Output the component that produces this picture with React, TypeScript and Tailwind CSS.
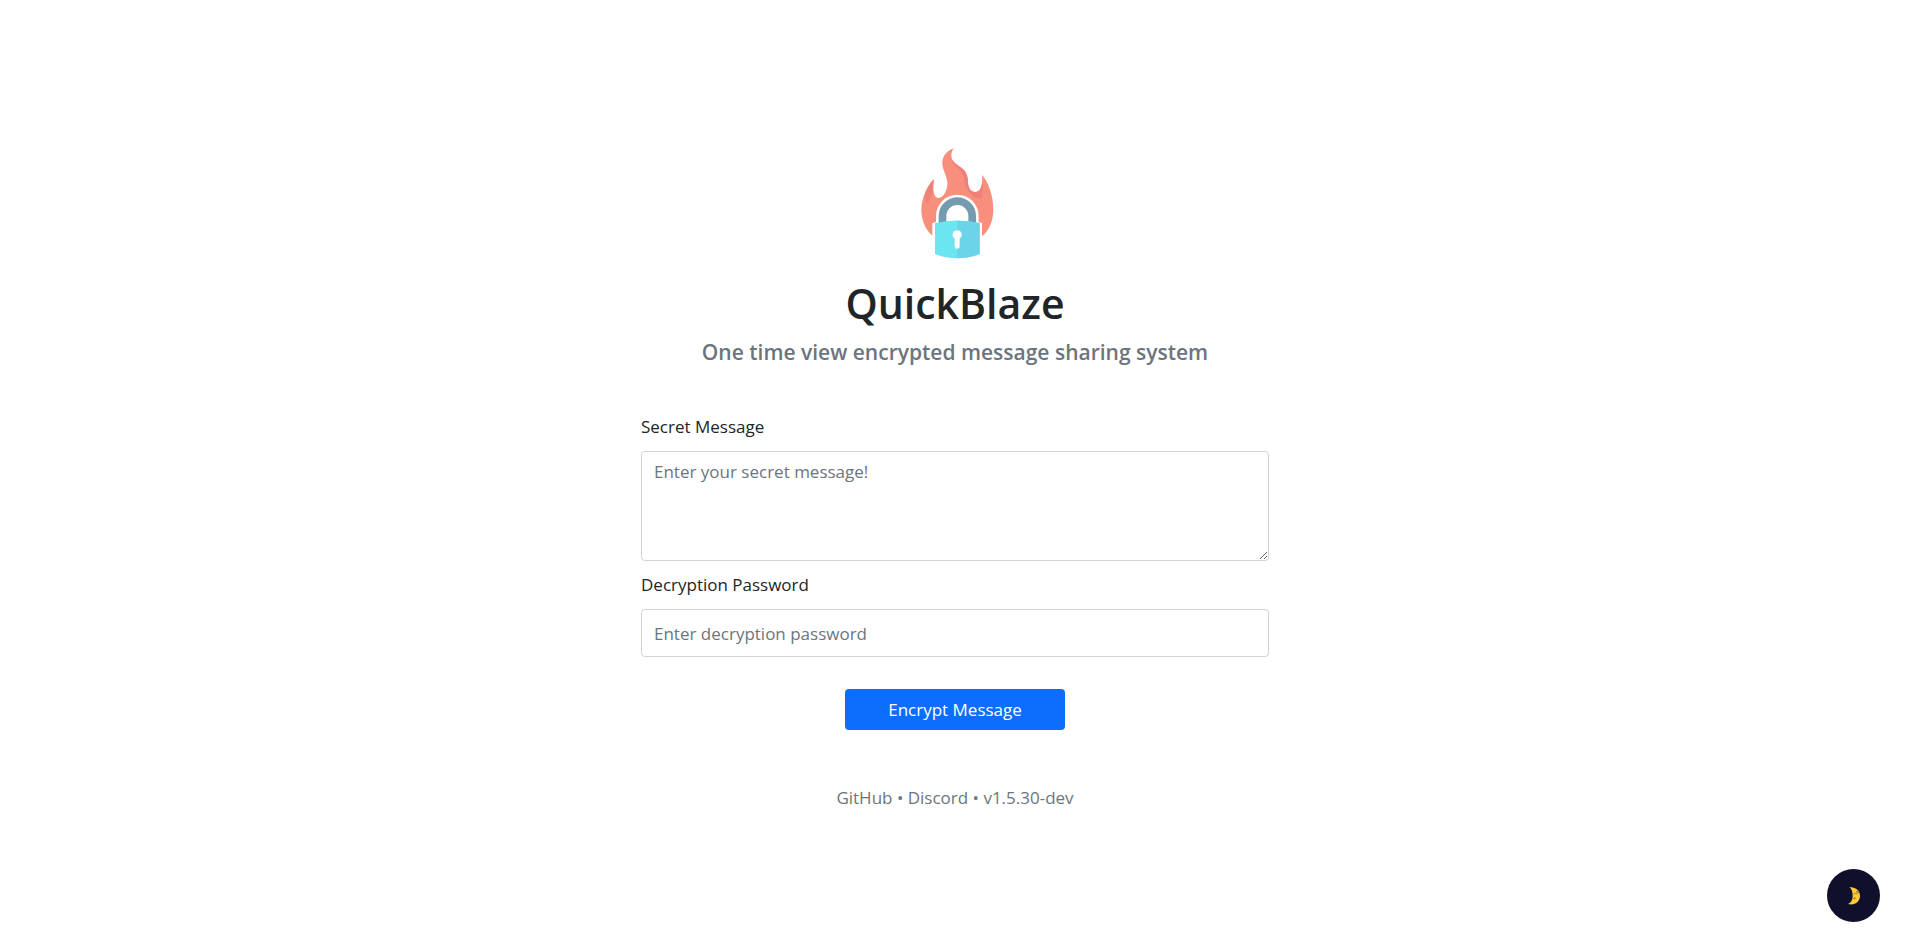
import React from "react";

function Logo() {
  return (
    <svg viewBox="36 50 258 345" className="h-[115px] w-[86px]" role="img" aria-label="QuickBlaze logo">
      <path
        d="M161 57C146 61 130 76 127 96C125 119 139 135 142 157C144 181 131 205 115 206C101 206 97 180 102 150C82 166 65 204 64 241C64 273 77 303 99 320H247C268 303 280 273 280 241C280 203 268 162 246 136C250 168 240 188 226 188C211 188 204 174 204 158C204 139 197 125 185 116C169 104 153 96 154 78C154 70 157 63 161 57Z"
        fill="#f88f7c"
      />
      <path
        d="M154 88C154 105 171 113 180 123C197 140 188 158 199 176C208 193 225 210 245 208C249 196 249 170 246 150C247 173 240 188 226 188C211 188 204 174 204 158C204 139 197 125 185 116C171 106 158 99 154 88Z"
        fill="#ee8179"
      />
      <path d="M102 150C90 163 82 177 77 193C74 207 76 219 83 225C88 208 96 194 99 184C98 173 100 163 102 150Z" fill="#ee8179" />
      <path d="M97 395V281Q102 279 108 278V260A63 63 0 0 1 236 260V278L246 281V395Z" fill="#fff" />
      <path d="M116 282V260A55 55 0 0 1 228 260V282H205V260A33 33 0 0 0 139 260V282Z" fill="#759cae" />
      <path d="M105 281Q171 266 239 281V374Q205 387 171 387Q137 387 105 374Z" fill="#6be5f0" />
      <path d="M171 274Q205 274 239 281V374Q205 387 171 387Z" fill="#6bd4e9" />
      <path d="M171 303A13 13 0 0 0 164 327V352Q164 358 171 358Q179 358 179 352V327A13 13 0 0 0 171 303Z" fill="#fff" />
    </svg>
  );
}

function Moon() {
  return (
    <svg viewBox="0 0 36 54" className="h-[18px] w-3" aria-hidden="true">
      <path d="M4 1C22 -1 36 10 36 27C36 44 20 57 0 51C9 47 14 39 14 27C14 15 11 5 4 1Z" fill="#fccb3a" />
      <path d="M26 8C35 17 35 36 26 45C35 39 37 19 26 8Z" fill="#e9a92c" />
      <path d="M24 13L34 18M17 22Q22 17 29 21M28 15L31 11M15 34Q18 37 23 34" stroke="#6b5724" strokeWidth="2" fill="none" />
      <circle cx="20" cy="32" r="1.5" fill="#4b3b20" />
    </svg>
  );
}

const field =
  "block w-full rounded-[4px] border border-[#ced4da] bg-white px-3 text-[17px] text-[#212529] placeholder:text-[#6c757d] focus:border-[#86b7fe] focus:outline-none";

export default function App() {
  return (
    <div className="flex min-h-screen flex-col items-center justify-center bg-white pt-1 pr-5 pl-4 font-['Open_Sans','Noto_Sans',sans-serif] text-[17px] leading-6 text-[#212529]">
      <main className="flex w-full max-w-[628px] flex-col items-center">
        <Logo />
        <h1 className="mt-3 text-[41px] leading-[60px] font-semibold">QuickBlaze</h1>
        <h2 className="mt-1 text-center text-[21px] leading-[30px] font-semibold text-[#6c757d]">
          One time view encrypted message sharing system
        </h2>
        <form className="mt-12 flex w-full flex-col items-center" onSubmit={(e) => e.preventDefault()}>
          <div className="w-full">
            <label htmlFor="message" className="mb-3 block">Secret Message</label>
            <textarea id="message" placeholder="Enter your secret message!" className={`${field} h-[110px] resize-y py-2`} />
          </div>
          <div className="mt-3 w-full">
            <label htmlFor="password" className="mb-3 block">Decryption Password</label>
            <input id="password" type="password" placeholder="Enter decryption password" className={`${field} h-12`} />
          </div>
          <button type="submit" className="mt-8 h-[41px] w-[220px] rounded-[4px] bg-[#0d6efd] text-white">
            Encrypt Message
          </button>
        </form>
        <footer className="mt-14 text-[#6c757d]">
          <a href="#github">GitHub</a> • <a href="#discord">Discord</a> • <a href="#version">v1.5.30-dev</a>
        </footer>
      </main>
      <button
        type="button"
        aria-label="Toggle dark mode"
        className="fixed right-[34px] bottom-[30px] flex size-[53px] items-center justify-center rounded-full bg-[#100f2c]"
      >
        <Moon />
      </button>
    </div>
  );
}
